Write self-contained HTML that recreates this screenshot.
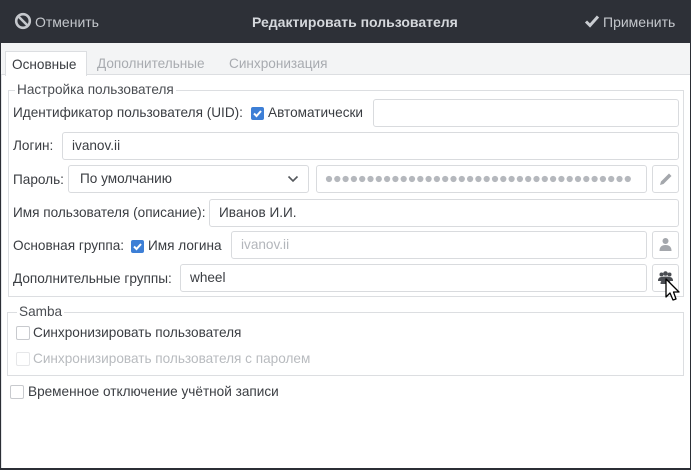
<!DOCTYPE html>
<html><head><meta charset="utf-8"><style>
*{box-sizing:border-box;margin:0;padding:0}
body{width:691px;height:470px;background:#2b2e35;font-family:"Liberation Sans","DejaVu Sans",sans-serif;font-size:13.6px;color:#3a3d42;position:relative;overflow:hidden}
.a{position:absolute}
.hdr{left:0;top:0;width:691px;height:43px;background:#2d3037;color:#c9ccd1}
.body{left:1px;top:43px;width:689px;height:425px;background:#fff}
.tabbar{left:1px;top:43px;width:689px;height:32px;background:#f3f4f5;border-bottom:1px solid #dcdee1}
.tab{top:51px;height:25px;line-height:25px;padding:0 8px;color:#a8abb0}
.inp{background:#fff;border:1px solid #d9dbde;border-radius:3px;height:28px;line-height:26px;padding-left:9px;color:#3a3d42}
.lbl{line-height:16px;white-space:nowrap}
.fs{border:1px solid #dcdee1}
.leg{background:#fff;padding:0 2px;line-height:14px;color:#4a4d52}
.cb{width:13px;height:13px;border-radius:2px;background:#3d7fd6}
.cbe{width:14px;height:14px;border:1px solid #c8cace;border-radius:2px;background:#fff}
.btn{width:27px;height:28px;border:1px solid #d9dbde;border-radius:3px;background:#fff}
</style></head><body>
<div class="a hdr"></div>
<svg class="a" style="left:14px;top:12px" width="18" height="18" viewBox="0 0 18 18"><circle cx="9" cy="9" r="6.8" fill="none" stroke="#c4c7cc" stroke-width="2.6"/><path d="M4.5 4.5L13.5 13.5" stroke="#c4c7cc" stroke-width="2.6"/></svg>
<div class="a lbl" style="left:35px;top:14px;color:#c4c7cc;font-size:14px">Отменить</div>
<div class="a lbl" style="left:252px;top:14px;color:#d5d8dc;font-size:14px;font-weight:bold">Редактировать пользователя</div>
<svg class="a" style="left:584px;top:13px" width="16" height="16" viewBox="0 0 16 16"><path d="M2 8.5L6 12.5L14 3.5" fill="none" stroke="#c9ccd1" stroke-width="3"/></svg>
<div class="a lbl" style="left:603px;top:14px;color:#c4c7cc;font-size:14px">Применить</div>
<div class="a body"></div>
<div class="a" style="left:1px;top:75px;width:1px;height:393px;background:#e3e5e8"></div>
<div class="a tabbar"></div>
<div class="a tab" style="left:5px;width:82px;background:#fff;border:1px solid #dcdee1;border-bottom:none;color:#3a3d42;padding:0 6px">Основные</div>
<div class="a tab" style="left:89px">Дополнительные</div>
<div class="a tab" style="left:221px">Синхронизация</div>

<div class="a fs" style="left:8px;top:90px;width:676px;height:207px"></div>
<div class="a leg" style="left:15px;top:83px">Настройка пользователя</div>

<div class="a lbl" style="left:13px;top:105px">Идентификатор пользователя (UID):</div>
<div class="a cb" style="left:251px;top:107px"><svg width="13" height="13"><path d="M3 6.5L5.5 9L10 4" fill="none" stroke="#fff" stroke-width="2"/></svg></div>
<div class="a lbl" style="left:268px;top:105px">Автоматически</div>
<div class="a inp" style="left:373px;top:99px;width:306px"></div>

<div class="a lbl" style="left:13px;top:138px">Логин:</div>
<div class="a inp" style="left:62px;top:132px;width:617px">ivanov.ii</div>

<div class="a lbl" style="left:13px;top:172px">Пароль:</div>
<div class="a inp" style="left:68px;top:165px;width:241px;padding-left:11px">По умолчанию</div>
<svg class="a" style="left:287px;top:174px" width="12" height="10"><path d="M1.5 2.5L6 7L10.5 2.5" fill="none" stroke="#55585d" stroke-width="1.6"/></svg>
<div class="a inp" style="left:316px;top:165px;width:331px"></div>
<svg class="a" style="left:325px;top:174px" width="312" height="10"><g fill="#b5b8bd">
<circle cx="4" cy="5" r="3.1"/><circle cx="12.3" cy="5" r="3.1"/><circle cx="20.6" cy="5" r="3.1"/><circle cx="28.9" cy="5" r="3.1"/><circle cx="37.2" cy="5" r="3.1"/><circle cx="45.5" cy="5" r="3.1"/><circle cx="53.8" cy="5" r="3.1"/><circle cx="62.1" cy="5" r="3.1"/><circle cx="70.4" cy="5" r="3.1"/><circle cx="78.7" cy="5" r="3.1"/><circle cx="87" cy="5" r="3.1"/><circle cx="95.3" cy="5" r="3.1"/><circle cx="103.6" cy="5" r="3.1"/><circle cx="111.9" cy="5" r="3.1"/><circle cx="120.2" cy="5" r="3.1"/><circle cx="128.5" cy="5" r="3.1"/><circle cx="136.8" cy="5" r="3.1"/><circle cx="145.1" cy="5" r="3.1"/><circle cx="153.4" cy="5" r="3.1"/><circle cx="161.7" cy="5" r="3.1"/><circle cx="170" cy="5" r="3.1"/><circle cx="178.3" cy="5" r="3.1"/><circle cx="186.6" cy="5" r="3.1"/><circle cx="194.9" cy="5" r="3.1"/><circle cx="203.2" cy="5" r="3.1"/><circle cx="211.5" cy="5" r="3.1"/><circle cx="219.8" cy="5" r="3.1"/><circle cx="228.1" cy="5" r="3.1"/><circle cx="236.4" cy="5" r="3.1"/><circle cx="244.7" cy="5" r="3.1"/><circle cx="253" cy="5" r="3.1"/><circle cx="261.3" cy="5" r="3.1"/><circle cx="269.6" cy="5" r="3.1"/><circle cx="277.9" cy="5" r="3.1"/><circle cx="286.2" cy="5" r="3.1"/><circle cx="294.5" cy="5" r="3.1"/><circle cx="302.8" cy="5" r="3.1"/></g></svg>
<div class="a btn" style="left:652px;top:165px"><svg width="25" height="26"><path d="M7 19L8 15.5L16 7.5L18.5 10L10.5 18Z" fill="#a4a7ac"/></svg></div>

<div class="a lbl" style="left:13px;top:205px">Имя пользователя (описание):</div>
<div class="a inp" style="left:209px;top:199px;width:470px">Иванов И.И.</div>

<div class="a lbl" style="left:13px;top:238px">Основная группа:</div>
<div class="a cb" style="left:131px;top:240px"><svg width="13" height="13"><path d="M3 6.5L5.5 9L10 4" fill="none" stroke="#fff" stroke-width="2"/></svg></div>
<div class="a lbl" style="left:148px;top:238px">Имя логина</div>
<div class="a inp" style="left:231px;top:231px;width:416px;color:#b3b6bb">ivanov.ii</div>
<div class="a btn" style="left:652px;top:231px"><svg width="25" height="26"><circle cx="12.5" cy="9" r="3" fill="#a4a7ac"/><path d="M6.5 19Q6.5 13 12.5 13Q18.5 13 18.5 19Z" fill="#a4a7ac"/></svg></div>

<div class="a lbl" style="left:13px;top:271px">Дополнительные группы:</div>
<div class="a inp" style="left:180px;top:264px;width:467px">wheel</div>
<div class="a btn" style="left:652px;top:264px"><svg width="25" height="26"><g fill="#4a4d52"><circle cx="8.5" cy="9.5" r="2"/><circle cx="16.5" cy="9.5" r="2"/><circle cx="12.5" cy="8.5" r="2.3"/><path d="M5 16Q5 12 8.5 12Q12.5 11 16.5 12Q20 12 20 16Z"/><path d="M7.5 19Q7.5 14 12.5 14Q17.5 14 17.5 19Z"/></g></svg></div>
<svg class="a" style="left:664px;top:278px" width="20" height="26"><path d="M2 1L2 19L6 15L9 22L12 21L9.5 14L15 14Z" fill="#fff" stroke="#000" stroke-width="1.3" stroke-linejoin="round"/></svg>

<div class="a fs" style="left:7px;top:312px;width:677px;height:64px"></div>
<div class="a leg" style="left:17px;top:305px">Samba</div>
<div class="a cbe" style="left:16px;top:326px"></div>
<div class="a lbl" style="left:33px;top:325px">Синхронизировать пользователя</div>
<div class="a cbe" style="left:16px;top:352px;border-color:#e6e7e9"></div>
<div class="a lbl" style="left:33px;top:351px;color:#b8bbbf">Синхронизировать пользователя с паролем</div>
<div class="a cbe" style="left:10px;top:385px"></div>
<div class="a lbl" style="left:28px;top:384px">Временное отключение учётной записи</div>
</body></html>
